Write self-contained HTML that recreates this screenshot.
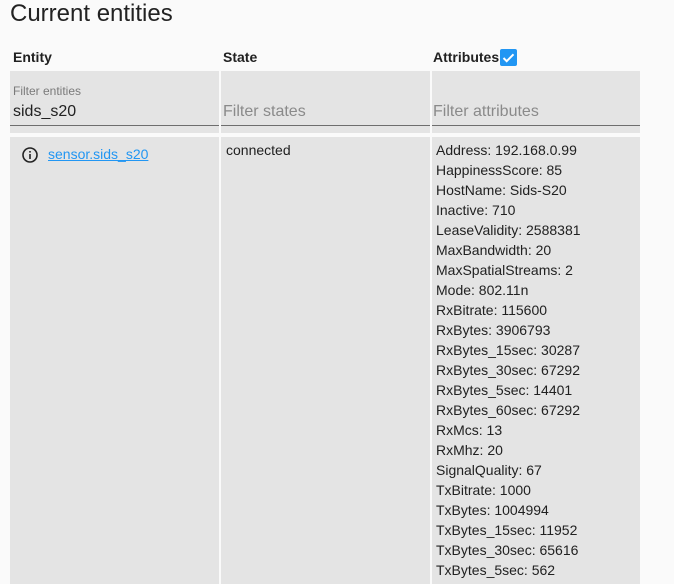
<!DOCTYPE html>
<html><head><meta charset="utf-8"><style>
html,body{margin:0;width:674px;height:584px;overflow:hidden}
body{background:#fafafa;font-family:"Liberation Sans",sans-serif;color:#212121;position:relative}
.a{position:absolute;white-space:nowrap}
.cell{position:absolute;background:#e4e4e4}
.h{font-weight:bold;font-size:14px;top:49px}
.ul{position:absolute;height:1px;background:#6e6e6e}
.ph{font-size:16px;color:#8a8a8a}
.attr{position:absolute;left:436px;top:140px;font-size:14px;line-height:20px}
</style></head><body>
<div class="a" style="left:10px;top:0px;font-size:24px;color:#222">Current entities</div>
<div class="a h" style="left:13px">Entity</div>
<div class="a h" style="left:223px">State</div>
<div class="a h" style="left:433px">Attributes</div>
<div class="a" style="left:500px;top:49px;width:17px;height:17px;background:#2196f3;border-radius:2px"><svg width="17" height="17" viewBox="0 0 17 17"><path d="M3.5 9l3.2 3.2L13.5 5.3" stroke="#fff" stroke-width="2" fill="none"/></svg></div>

<div class="cell" style="left:10px;top:71px;width:209px;height:62px"></div>
<div class="cell" style="left:221px;top:71px;width:209px;height:62px"></div>
<div class="cell" style="left:432px;top:71px;width:208px;height:62px"></div>
<div class="ul" style="left:10px;top:125px;width:209px"></div>
<div class="ul" style="left:221px;top:125px;width:209px"></div>
<div class="ul" style="left:432px;top:125px;width:208px"></div>
<div class="a" style="left:13px;top:84px;font-size:12px;color:#7a7a7a">Filter entities</div>
<div class="a" style="left:13px;top:103px;font-size:16px">sids_s20</div>
<div class="a ph" style="left:223px;top:103px">Filter states</div>
<div class="a ph" style="left:433px;top:103px">Filter attributes</div>

<div class="cell" style="left:10px;top:137px;width:209px;height:447px"></div>
<div class="cell" style="left:221px;top:137px;width:209px;height:447px"></div>
<div class="cell" style="left:432px;top:137px;width:208px;height:447px"></div>
<svg class="a" style="left:21px;top:146px" width="18" height="18" viewBox="0 0 18 18"><circle cx="9" cy="9" r="7" stroke="#222" stroke-width="1.6" fill="none"/><rect x="8.2" y="8" width="1.6" height="5" fill="#222"/><rect x="8.2" y="5" width="1.6" height="1.6" fill="#222"/></svg>
<div class="a" style="left:48px;top:146px;font-size:14px;color:#2196f3;text-decoration:underline">sensor.sids_s20</div>
<div class="a" style="left:226px;top:142px;font-size:14px">connected</div>
<div class="attr">Address: 192.168.0.99<br>HappinessScore: 85<br>HostName: Sids-S20<br>Inactive: 710<br>LeaseValidity: 2588381<br>MaxBandwidth: 20<br>MaxSpatialStreams: 2<br>Mode: 802.11n<br>RxBitrate: 115600<br>RxBytes: 3906793<br>RxBytes_15sec: 30287<br>RxBytes_30sec: 67292<br>RxBytes_5sec: 14401<br>RxBytes_60sec: 67292<br>RxMcs: 13<br>RxMhz: 20<br>SignalQuality: 67<br>TxBitrate: 1000<br>TxBytes: 1004994<br>TxBytes_15sec: 11952<br>TxBytes_30sec: 65616<br>TxBytes_5sec: 562</div>
</body></html>
